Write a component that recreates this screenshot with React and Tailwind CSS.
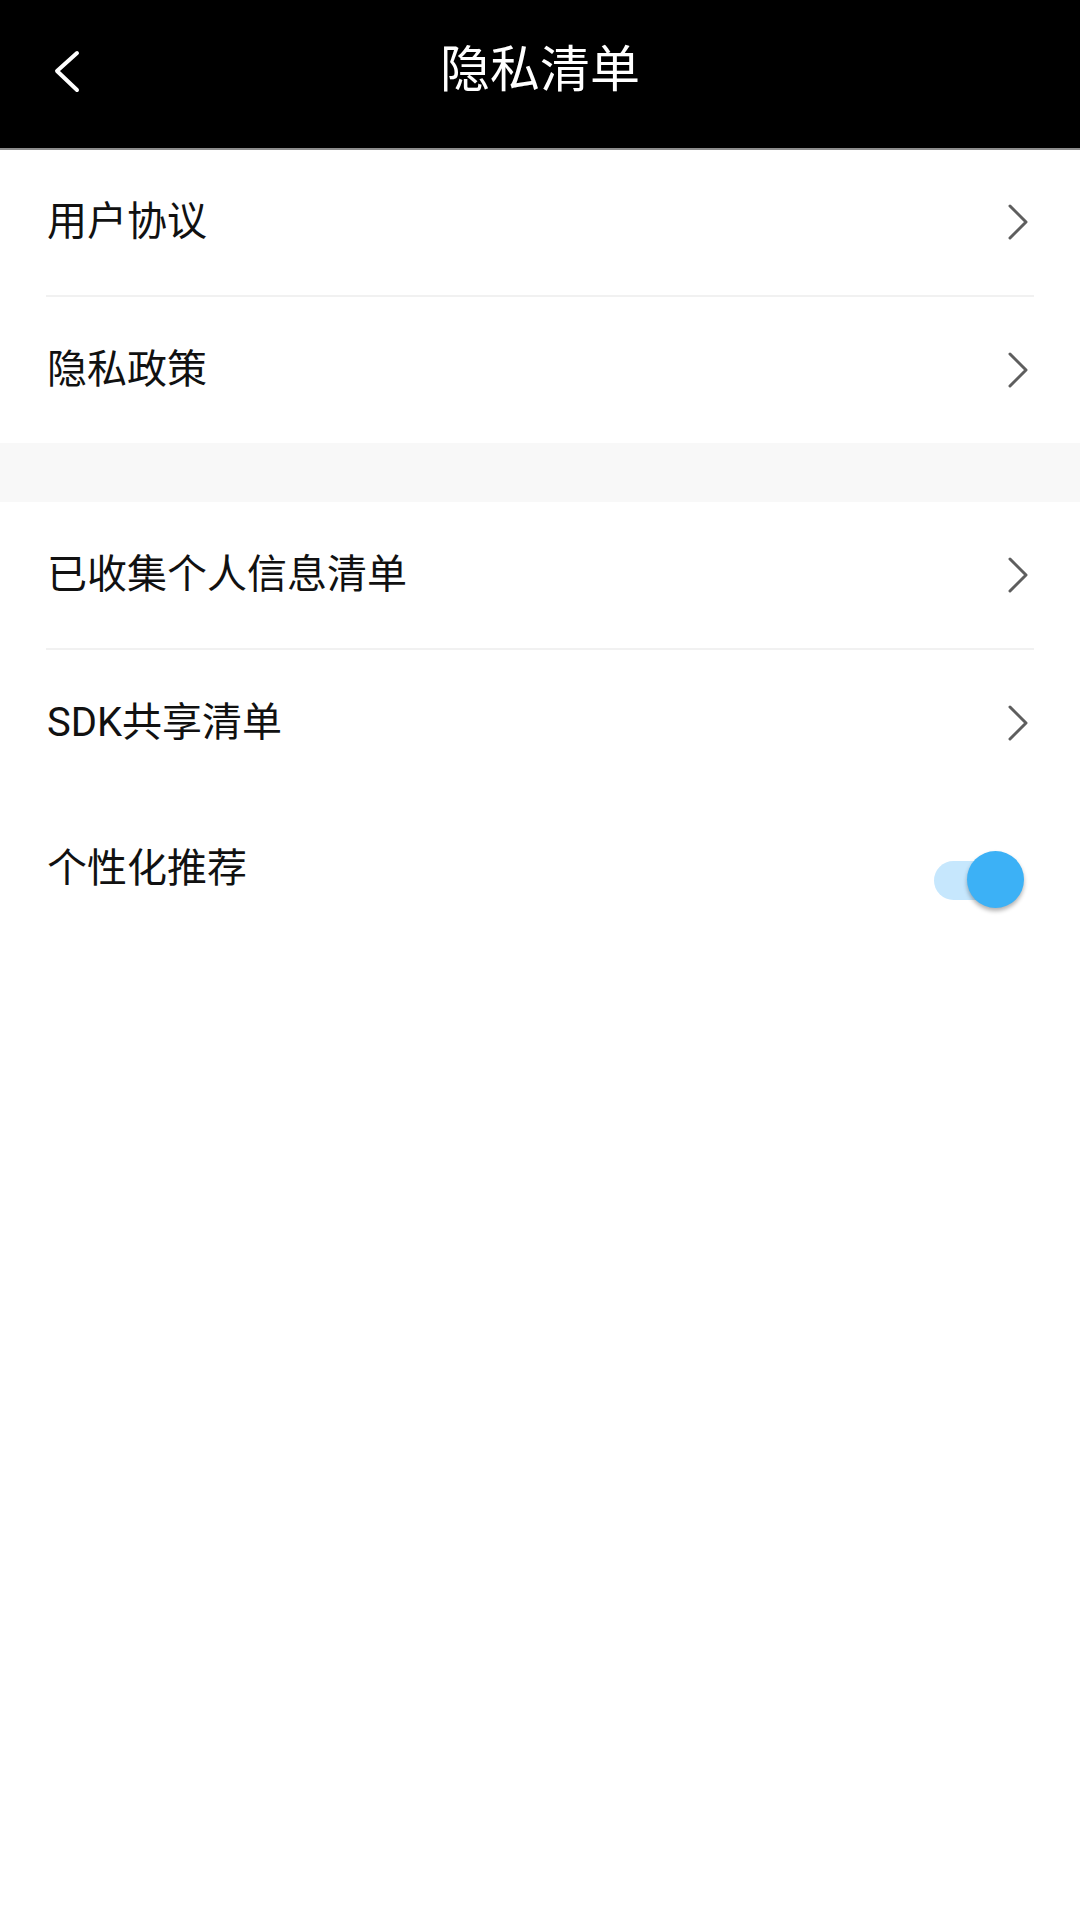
import React, { useState } from 'react'

const Chevron = () => (
  <svg width="22" height="36" viewBox="0 0 22 36" fill="none" className="shrink-0">
    <path d="M3 2 L19 18 L3 34" stroke="#5e5e5e" strokeWidth="3" strokeLinecap="round" strokeLinejoin="round" />
  </svg>
)

const Row = ({ label, right }) => (
  <div className="h-[146px] flex items-center justify-between pl-[47px] pr-[51px]">
    <span className="text-[40px] leading-none text-[#111]">{label}</span>
    {right || <Chevron />}
  </div>
)

const Divider = () => <div className="h-[2px] mx-[46px] bg-[#f1f1f1]" />

const Toggle = ({ on, onChange }) => (
  <button onClick={() => onChange(!on)} className="relative w-[91px] h-[58px] mt-[22px] mr-[4px]">
    <span className={`absolute left-0 top-[10px] w-[86px] h-[39px] rounded-full ${on ? 'bg-[#c6e7fd]' : 'bg-[#d6d6d6]'}`} />
    <span
      className={`absolute top-0 w-[57px] h-[57px] rounded-full shadow-[0_3px_4px_rgba(0,0,0,0.3)] ${
        on ? 'left-[33px] bg-[#3cb1f6]' : 'left-0 bg-[#f1f1f1]'
      }`}
    />
  </button>
)

export default function App() {
  const [recommend, setRecommend] = useState(true)

  return (
    <div className="min-h-[1920px] bg-white" style={{ fontFamily: 'Roboto, "Noto Sans CJK SC", sans-serif' }}>
      {/* Header */}
      <div className="h-[150px] bg-black border-b-2 border-[#8c8c8c] flex items-center relative">
        <button className="absolute left-[50px] top-[50px] w-[32px] h-[44px] flex items-center justify-center">
          <svg width="30" height="44" viewBox="0 0 30 44" fill="none">
            <path d="M26 3 L6 21 L26 40" stroke="#fff" strokeWidth="4" strokeLinecap="round" strokeLinejoin="round" />
          </svg>
        </button>
        <h1 className="w-full text-center text-[50px] leading-none text-white -mt-[8px]">隐私清单</h1>
      </div>

      {/* Group 1 */}
      <div className="-mt-px">
        <Row label="用户协议" />
        <Divider />
        <Row label="隐私政策" />
      </div>

      <div className="h-[59px] bg-[#f8f8f8]" />

      {/* Group 2 */}
      <div>
        <Row label="已收集个人信息清单" />
        <Divider />
        <Row label="SDK共享清单" />
        <div className="h-[146px] flex items-center justify-between pl-[47px] pr-[51px]">
          <span className="text-[40px] leading-none text-[#111]">个性化推荐</span>
          <Toggle on={recommend} onChange={setRecommend} />
        </div>
      </div>
    </div>
  )
}
